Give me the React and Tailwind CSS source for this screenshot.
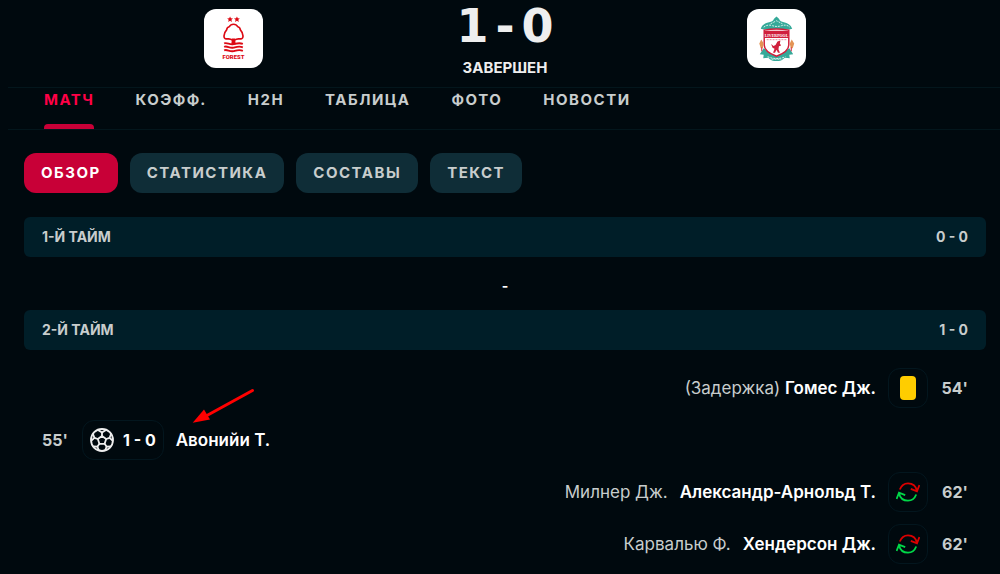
import React, { useState } from 'react';
import clsx from 'clsx';

const TABS = ['Матч', 'Коэфф.', 'H2H', 'Таблица', 'Фото', 'Новости'];
const VIEWS = ['Обзор', 'Статистика', 'Составы', 'Текст'];

const ForestCrest = () => (
  <svg viewBox="0 0 60 60" className="w-full h-full" fill="none" stroke="#dd0a14" aria-label="Nottingham Forest">
    <g fill="#dd0a14" stroke="none">
      <path d="M26.500 7.500l.9 1.900 2.100.2-1.600 1.400.5 2.100-1.900-1.100-1.900 1.100.5-2.100-1.600-1.400 2.100-.2z" />
      <path d="M33.500 7.500l.9 1.900 2.100.2-1.600 1.400.5 2.100-1.900-1.100-1.900 1.100.5-2.100-1.600-1.400 2.100-.2z" />
      <path d="M28.500 30l-.8 6h4.600l-.8-6z" />
    </g>
    <path strokeWidth="1.700" strokeLinejoin="round" d="M30 15.500c-2 0-3.500 1-4.300 2.500-1.500.3-2.500 1.600-2.700 3.200-1.500 1.500-2.200 3.700-2.600 5.800-.3 2 .6 3.200 2 3.400 1.800.2 3.400-.2 4.700.3l2.900 1.300 2.900-1.300c1.300-.5 2.900-.1 4.700-.3 1.400-.2 2.300-1.400 2-3.400-.4-2.100-1.100-4.300-2.600-5.800-.2-1.600-1.200-2.900-2.700-3.200-.8-1.500-2.300-2.500-4.300-2.500z" />
    <path strokeWidth="1.900" d="M20.500 35c3-1.500 5.500 1.800 9.500.8s6-1.800 9.500-.3M20.500 38.500c3-1.500 5.500 1.800 9.500.8s6-1.800 9.500-.3M20.500 42c3-1.500 5.500 1.800 9.500.8s6-1.800 9.500-.3" />
    <text x="30" y="51" textAnchor="middle" className="font-['Roboto'] font-black text-[6px]" fill="#dd0a14" stroke="none">FOREST</text>
  </svg>
);

const LiverpoolCrest = () => (
  <svg viewBox="0 0 60 60" className="w-full h-full" fill="none" aria-label="Liverpool">
    <path fill="#35a999" d="M14 20c1.500-4 5-6 8.500-6.500 2.500-.3 4-1 5-3.500l2.500-2.500 2.500 2.500c1 2.500 2.500 3.200 5 3.500 3.500.5 7 2.500 8.500 6.500l-3 .8H17z" />
    <path stroke="#d8f0ec" strokeWidth="1" strokeDasharray="2 1" d="M17 18.500c3-2.500 6-2.500 9-1.500s6 1 9 0 6-1 8.500 1.500M24 15l6-3 6 3" />
    <path fill="#35a999" d="M13 46l4-6 8 5.500h10l8-5.500 4 6-4 .5.5 3.500-5-.5c-2.500 2.500-5 3.500-8.500 3.500s-6-1-8.500-3.500l-5 .5.5-3.500z" />
    <path stroke="#d8f0ec" strokeWidth="1" strokeDasharray="2 1" d="M21 48.500c5 2.500 13 2.500 18 0M25 51h10" />
    <path fill="#fff" stroke="#d0203c" strokeWidth="1.500" d="M17.500 21.500c8-1.500 17-1.500 25 0v15c0 5-6 9-12.500 11.500C23.500 45.500 17.500 41.500 17.500 36.500z" />
    <path fill="#d0203c" d="M17.500 22h25v7.500h-25z" />
    <text x="30" y="28" textAnchor="middle" className="font-['Liberation_Serif'] font-bold text-[4px]" fill="#fff">LIVERPOOL</text>
    <path stroke="#e78b99" d="M20 31.200h20" strokeDasharray="2 1" />
    <path fill="#d0203c" d="M31 33l3-1-.6 3 1.300 2-2.200 1-.5 3 1.500 3.500h-2l-1.500-3-1.500 3h-2l1.500-4-2-1-1.500-4 2.500 2 2-1z" />
    <path fill="#e39455" d="M14.500 31l2.500 4-1 5h-2l-1.500-5zM45.500 31l2.500 4-1.500 5h-2l-1-5z" />
    <path stroke="#d0203c" d="M15 39v4M45 39v4" />
  </svg>
);

const BallIcon = () => (
  <svg viewBox="0 0 24 24" className="w-6 h-6" fill="none" stroke="#eeeeee" strokeWidth="1.800" strokeLinejoin="round" aria-hidden="true">
    <circle cx="12" cy="12" r="11" />
    <path d="M12 8l4.200 3-1.600 4.800H9.400L7.800 11z" />
    <path d="M12 8V4.500M16.200 11l3.400-1.200M14.600 15.800l2.100 2.900M9.400 15.800l-2.100 2.900M7.800 11L4.400 9.800" />
    <path d="M8 2l4 2.500L16 2M21 6l-1.400 3.800 3.200 3M20.500 18.500l-3.800.2-1.700 4M3.500 18.500l3.800.2 1.700 4M3 6l1.400 3.800-3.200 3" />
  </svg>
);

const SwapIcon = () => (
  <svg viewBox="0 0 24 24" className="w-6 h-6" fill="none" strokeWidth="1.800" aria-hidden="true">
    <path stroke="#dc0000" d="M3.800 9.500C5.300 5.500 8.400 3.300 12 3.300c4.500 0 8 3 9 7.500M14.800 8.800l6.200 2.500L23.400 5" />
    <path stroke="#00d748" d="M20.200 14.500c-1.500 4-4.600 6.200-8.200 6.200-4.500 0-8-3-9-7.500M9.200 15.200L3 12.700.6 19" />
  </svg>
);

const IconBox = ({ children }) => (
  <div className="h-10 min-w-10 flex items-center justify-center rounded-xl border border-[#03161e]">
    {children}
  </div>
);

const PeriodHeader = ({ title, score }) => (
  <div className="h-10 px-[18px] flex items-center justify-between rounded-md bg-[#001e28] text-[14px] font-bold text-[#c8cdcd]">
    <h3>{title}</h3>
    <span>{score}</span>
  </div>
);

const AwayEvent = ({ minute, note, player, children }) => (
  <li className="flex items-center justify-end px-[18px]">
    <span className="mr-3 flex text-[17px]">
      <span className="text-[#c8cdcd]">{note}</span>
      <a href="#player" className="font-semibold text-white">{player}</a>
    </span>
    <IconBox>{children}</IconBox>
    <span className="w-10 text-right font-bold text-[#c8cdcd]">{minute}'</span>
  </li>
);

const App = () => {
  const [tab, setTab] = useState('Матч');
  const [view, setView] = useState('Обзор');

  return (
    <div className="min-h-screen bg-[#00090e] font-['Inter','Noto_Sans',sans-serif] text-[16px] leading-6 text-white">
      <header className="pl-6 pr-[14px]">
        <div className="h-[87px] px-[74px] grid grid-cols-3 justify-items-center items-start">
          <div className="mt-[9px] size-[59px] rounded-xl bg-white overflow-hidden">
            <ForestCrest />
          </div>
          <div className="flex flex-col items-center">
            <div className="flex items-center gap-[7px] font-['DejaVu_Sans'] font-bold text-[46px] leading-[52px] text-[#eeeeee]">
              <span>1</span>
              <span>-</span>
              <span>0</span>
            </div>
            <span className="mt-1 text-[15px] font-bold uppercase text-[#eeeeee]">Завершен</span>
          </div>
          <div className="mt-[9px] size-[59px] rounded-xl bg-white overflow-hidden">
            <LiverpoolCrest />
          </div>
        </div>
      </header>

      <nav className="ml-2 h-[43px] pl-9 flex gap-[41px] border-y border-[#03161c]">
        {TABS.map(name => (
          <button
            key={name}
            onClick={() => setTab(name)}
            className={clsx(
              'flex flex-col justify-between text-[15px] leading-6 font-bold uppercase tracking-widest cursor-pointer',
              tab === name ? 'text-[#ff0046]' : 'text-[#c8cdcd]'
            )}
          >
            <span>{name}</span>
            {tab === name && <span className="w-full h-[5px] rounded-t-sm bg-[#c80037]" />}
          </button>
        ))}
      </nav>

      <main className="pl-6 pr-[14px]">
        <div className="pt-[23px] pb-6 flex gap-3">
          {VIEWS.map(name => (
            <button
              key={name}
              onClick={() => setView(name)}
              className={clsx(
                'h-10 px-[17px] rounded-xl text-[15px] font-bold uppercase tracking-widest cursor-pointer',
                view === name ? 'bg-[#c80037] text-white' : 'bg-[#0f2d37] text-[#c8cdcd]'
              )}
            >
              {name}
            </button>
          ))}
        </div>

        <PeriodHeader title="1-Й ТАЙМ" score="0 - 0" />
        <p className="h-[53px] pt-1 flex items-center justify-center text-[14px] font-bold">-</p>
        <PeriodHeader title="2-Й ТАЙМ" score="1 - 0" />

        <ul className="pt-[18px] flex flex-col gap-3">
          <AwayEvent minute={54} note={<>(Задержка)&nbsp;</>} player="Гомес Дж.">
            <span className="w-4 h-6 rounded bg-[#ffcd00]" />
          </AwayEvent>
          <li className="relative flex items-center px-[18px]">
            <span className="w-10 font-bold text-[#c8cdcd]">55'</span>
            <IconBox>
              <span className="px-[7px] flex items-center gap-[9px] font-bold">
                <BallIcon />
                1 - 0
              </span>
            </IconBox>
            <a href="#player" className="ml-3 text-[17px] font-semibold">Авонийи Т.</a>
            <svg viewBox="0 0 64 36" className="absolute left-[168px] -top-8 w-16 h-9" aria-hidden="true">
              <path d="M60.500 2.500L14 28" stroke="#ff0000" strokeWidth="3" strokeLinecap="round" />
              <path d="M.7 34.700L12 21.500l6 10z" fill="#ff0000" />
            </svg>
          </li>
          <AwayEvent minute={62} note="Милнер Дж." player={<span className="ml-3">Александр-Арнольд Т.</span>}>
            <SwapIcon />
          </AwayEvent>
          <AwayEvent minute={62} note="Карвалью Ф." player={<span className="ml-3">Хендерсон Дж.</span>}>
            <SwapIcon />
          </AwayEvent>
        </ul>
      </main>
    </div>
  );
};

export default App;
